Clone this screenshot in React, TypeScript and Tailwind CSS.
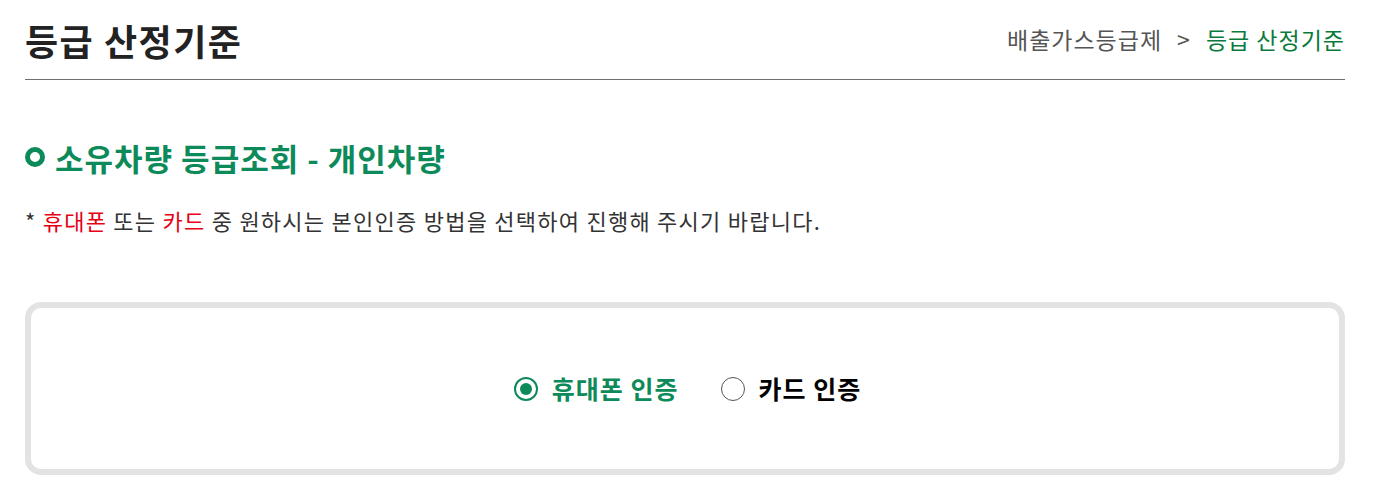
import React, { useState } from "react";

export default function App() {
  const [method, setMethod] = useState<"phone" | "card">("phone");

  const options = [
    { key: "phone" as const, label: "휴대폰 인증" },
    { key: "card" as const, label: "카드 인증" },
  ];

  return (
    <div
      className="bg-white pl-[25px] pr-[32px] pb-[13px] text-[#333]"
      style={{ fontFamily: '"Noto Sans CJK KR", "Noto Sans", sans-serif' }}
    >
      {/* 상단 제목 + 경로 */}
      <div className="flex h-[80px] items-center justify-between border-b border-[#707070]">
        <h1 className="text-[36px] font-bold leading-none text-[#222] tracking-[1.5px]">등급 산정기준</h1>
        <div className="flex items-center text-[23px] leading-none tracking-[1px]">
          <span className="text-[#555]">배출가스등급제</span>
          <span className="mx-[15px] text-[#555]">&gt;</span>
          <span className="text-[#0a7a3c]">등급 산정기준</span>
        </div>
      </div>

      {/* 섹션 제목 */}
      <div className="mt-[57px] flex h-[40px] items-center gap-[10px]">
        <span className="h-[20px] w-[20px] rounded-full border-[5px] border-[#0d8a5a]" />
        <h2 className="text-[31px] font-bold leading-none text-[#0d8a5a] tracking-[1px]">
          소유차량 등급조회 - 개인차량
        </h2>
      </div>

      <p className="mt-[28px] h-[30px] text-[22px] leading-[30px] tracking-[1.25px] text-[#333]">
        * <span className="text-[#e60012]">휴대폰</span> 또는{" "}
        <span className="text-[#e60012]">카드</span> 중 원하시는 본인인증 방법을 선택하여 진행해 주시기 바랍니다.
      </p>

      {/* 인증 방법 선택 */}
      <div className="mt-[67px] flex h-[173px] items-center justify-center gap-[42px] rounded-[16px] border-[6px] border-[#e3e3e3] pl-[5px]">
        {options.map((o) => {
          const on = method === o.key;
          return (
            <label
              key={o.key}
              className="flex cursor-pointer items-center gap-[14px]"
              onClick={() => setMethod(o.key)}
            >
              <span
                className={
                  on
                    ? "flex h-[24px] w-[24px] items-center justify-center rounded-full border-2 border-[#0d8a5a]"
                    : "h-[24px] w-[24px] rounded-full border border-[#555]"
                }
              >
                {on && <span className="h-[12px] w-[12px] rounded-full bg-[#0d8a5a]" />}
              </span>
              <span
                className={
                  on
                    ? "text-[25px] font-bold leading-none tracking-[1px] text-[#0d8a5a]"
                    : "text-[25px] font-bold leading-none tracking-[1px] text-black"
                }
              >
                {o.label}
              </span>
            </label>
          );
        })}
      </div>
    </div>
  );
}
